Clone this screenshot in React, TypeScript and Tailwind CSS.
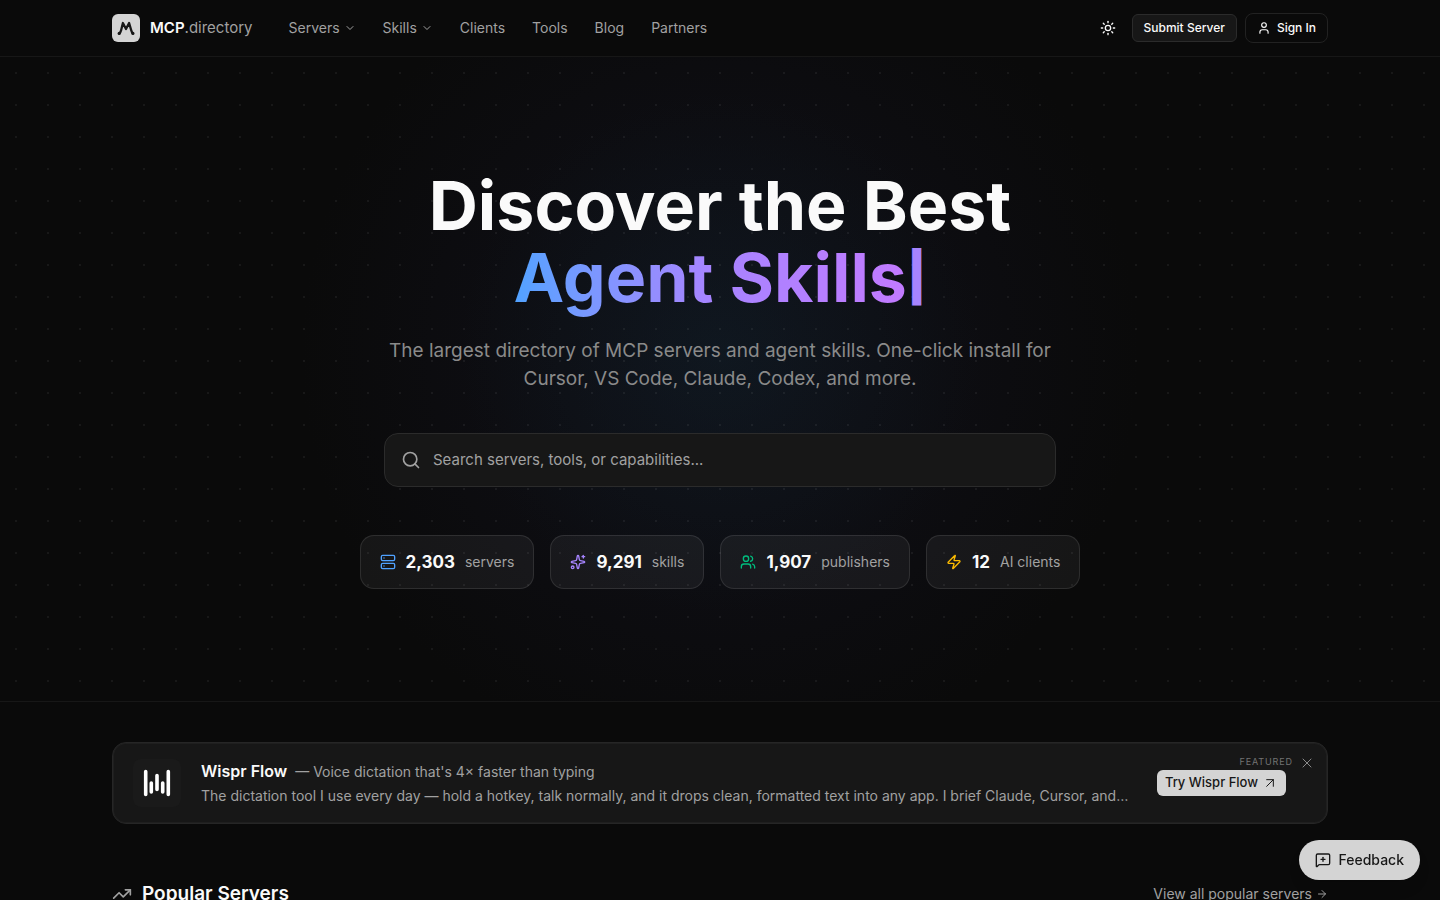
import React, { FC, FormEvent, useCallback, useState } from "react";
import {
  ArrowRight,
  ArrowUpRight,
  ChevronDown,
  LucideIcon,
  MessageSquarePlus,
  Search,
  Server,
  Sparkles,
  Sun,
  TrendingUp,
  User,
  Users,
  X,
  Zap,
} from "lucide-react";

const navItems = [
  { label: "Servers", href: "#servers", hasMenu: true },
  { label: "Skills", href: "#skills", hasMenu: true },
  { label: "Clients", href: "#clients" },
  { label: "Tools", href: "#tools" },
  { label: "Blog", href: "#blog" },
  { label: "Partners", href: "#partners" },
];

type Stat = {
  icon: LucideIcon;
  color: string;
  value: string;
  label: string;
};

const stats: Stat[] = [
  { icon: Server, color: "text-[#50a2ff]", value: "2,303", label: "servers" },
  { icon: Sparkles, color: "text-[#a684ff]", value: "9,291", label: "skills" },
  { icon: Users, color: "text-[#00bc7d]", value: "1,907", label: "publishers" },
  { icon: Zap, color: "text-[#fcbb00]", value: "12", label: "AI clients" },
];

const Logo: FC = () => (
  <a href="#home" className="flex items-center gap-2.5">
    <span className="flex size-7 items-center justify-center rounded-md bg-[#d4d4d4]">
      <svg viewBox="0 0 28 28" className="size-7" fill="none" aria-hidden="true">
        <path
          d="M7.3 19.4C8.6 18.6 8.9 17 9.3 15.5L10.9 9L14 15L17.1 9L19 15.5C19.5 17.3 19.8 18.6 20.9 19.4"
          stroke="#171717"
          strokeWidth="2.3"
          strokeLinecap="round"
          strokeLinejoin="round"
        />
        <circle cx="7.2" cy="19.4" r="1.6" fill="#171717" />
        <circle cx="20.9" cy="19.4" r="1.6" fill="#171717" />
      </svg>
    </span>
    <span className="text-[15px] text-[#a1a1a1]">
      <span className="font-semibold text-[#fafafa]">MCP</span>.directory
    </span>
  </a>
);

const Header: FC = () => (
  <header className="border-b border-[#171717]">
    <div className="mx-auto flex h-14 max-w-7xl items-center px-8">
      <Logo />
      <nav className="ml-9 flex items-center gap-[27px] text-sm text-[#a1a1a1]">
        {navItems.map(({ label, href, hasMenu }) => (
          <a key={label} href={href} className="flex items-center gap-1">
            {label}
            {hasMenu && <ChevronDown className="size-3" />}
          </a>
        ))}
      </nav>
      <div className="ml-auto flex items-center gap-2 text-xs font-medium text-[#fafafa]">
        <button
          type="button"
          aria-label="Toggle theme"
          className="flex size-8 items-center justify-center"
        >
          <Sun className="size-4" />
        </button>
        <button
          type="button"
          className="h-7 rounded-md border border-[#2b2b2b] bg-[#171717] px-[11px]"
        >
          Submit Server
        </button>
        <button
          type="button"
          className="flex h-[30px] items-center gap-1.5 rounded-lg border border-[#222222] px-[11px]"
        >
          <User className="size-3.5" />
          Sign In
        </button>
      </div>
    </div>
  </header>
);

const SearchBox: FC = () => {
  const [query, setQuery] = useState("");

  const onSubmit = useCallback((e: FormEvent<HTMLFormElement>) => {
    e.preventDefault();
  }, []);

  return (
    <form
      role="search"
      onSubmit={onSubmit}
      className="mt-10 flex h-[54px] w-full max-w-2xl items-center gap-3 rounded-[14px] border border-[#2b2b2b] bg-[#171717] px-4 text-[#a1a1a1]"
    >
      <Search className="size-5" />
      <input
        type="search"
        aria-label="Search servers"
        value={query}
        onChange={(e) => setQuery(e.target.value)}
        placeholder="Search servers, tools, or capabilities..."
        className="flex-1 bg-transparent text-[15px] outline-none placeholder:text-[#a1a1a1]"
      />
    </form>
  );
};

const Hero: FC = () => (
  <section className="border-b border-[#171717] bg-[radial-gradient(circle_at_16px_16px,rgba(255,255,255,0.06)_1px,transparent_1px),radial-gradient(circle_260px_at_50%_46%,rgba(14,36,42,0.35),transparent),radial-gradient(circle_420px_at_50%_46%,rgba(24,24,46,0.45),transparent)] bg-[size:32px_32px,100%_100%,100%_100%]">
    <div className="mx-auto flex max-w-7xl flex-col items-center px-8 py-28">
      <h1 className="text-center text-[68px] leading-[72px] font-bold text-[#fafafa]">
        Discover the Best
        <span className="flex items-center justify-center">
          <span className="-mb-3 bg-linear-to-r from-[#50a2ff] via-[#a684ff] to-[#c27aff] bg-clip-text pb-3 text-transparent">
            Agent Skills
          </span>
          <span className="text-5xl font-black text-[#a684ff]">|</span>
        </span>
      </h1>
      <p className="mt-6 max-w-2xl text-center text-[19px] leading-7 text-[#8a8a8a]">
        The largest directory of MCP servers and agent skills. One-click install
        for Cursor, VS Code, Claude, Codex, and more.
      </p>
      <SearchBox />
      <div className="mt-12 flex flex-wrap justify-center gap-4">
        {stats.map(({ icon: Icon, color, value, label }) => (
          <div
            key={label}
            className="flex h-[54px] items-center gap-2.5 rounded-[14px] border border-white/10 bg-white/5 px-[19px]"
          >
            <Icon className={`size-4 ${color}`} />
            <span className="text-[17px] leading-7 font-bold text-[#fafafa]">
              {value}
            </span>
            <span className="text-sm text-[#a1a1a1]">{label}</span>
          </div>
        ))}
      </div>
    </div>
  </section>
);

const WisprLogo: FC = () => (
  <span className="flex size-12 shrink-0 items-center justify-center rounded-lg bg-[#1a1a1a]">
    <svg viewBox="0 0 28 28" className="size-7" aria-hidden="true">
      <path
        d="M2.7 2.5v23M8.3 14v9M14 6.5v14M19.7 14v9M25.3 2.5v23"
        stroke="#fff"
        strokeWidth="3.6"
        strokeLinecap="round"
      />
    </svg>
  </span>
);

const Featured: FC = () => {
  const [open, setOpen] = useState(true);
  if (!open) return null;

  return (
    <aside className="relative flex h-[82px] items-center gap-5 rounded-[14px] border border-[#262626] bg-[#171717] pr-[41px] pl-5 text-[#a1a1a1] ring-1 ring-[#1f1f1f] ring-inset">
      <WisprLogo />
      <div className="min-w-0 flex-1 text-sm">
        <p className="truncate leading-6">
          <span className="mr-2 text-base font-semibold text-[#fafafa]">
            Wispr Flow
          </span>
          — Voice dictation that's 4× faster than typing
        </p>
        <p className="line-clamp-1 leading-6">
          The dictation tool I use every day — hold a hotkey, talk normally, and
          it drops clean, formatted text into any app. I brief Claude, Cursor, and
          my notes with it.
        </p>
      </div>
      <a
        href="#wispr-flow"
        className="flex h-[26px] items-center gap-1 rounded-md bg-[#d4d4d4] px-2 text-[13px] font-medium text-[#171717]"
      >
        Try Wispr Flow
        <ArrowUpRight className="size-4" strokeWidth={1.5} />
      </a>
      <div className="absolute top-3 right-3 flex items-start gap-1.5 text-[9px] text-[#737373]">
        <span className="tracking-widest uppercase">Featured</span>
        <button type="button" aria-label="Dismiss" onClick={() => setOpen(false)}>
          <X className="size-4 text-[#8a8a8a]" strokeWidth={1.5} />
        </button>
      </div>
    </aside>
  );
};

export default function App() {
  return (
    <div className="min-h-screen bg-[#0a0a0a] font-[Inter,sans-serif]">
      <Header />
      <Hero />
      <main className="mx-auto max-w-7xl px-8 pt-10">
        <Featured />
        <div className="mt-14 flex items-center justify-between">
          <h2 className="flex items-center gap-2.5 text-[19px] leading-7 font-semibold text-[#fafafa]">
            <TrendingUp className="size-5 text-[#a1a1a1]" />
            Popular Servers
          </h2>
          <a
            href="#popular"
            className="flex items-center gap-1 text-sm text-[#a1a1a1]"
          >
            View all popular servers
            <ArrowRight className="size-3" />
          </a>
        </div>
      </main>
      <button
        type="button"
        className="fixed right-5 bottom-5 flex h-10 items-center gap-2 rounded-full bg-[#d4d4d4] px-4 text-sm font-medium text-[#171717] shadow-lg"
      >
        <MessageSquarePlus className="size-4" />
        Feedback
      </button>
    </div>
  );
}
